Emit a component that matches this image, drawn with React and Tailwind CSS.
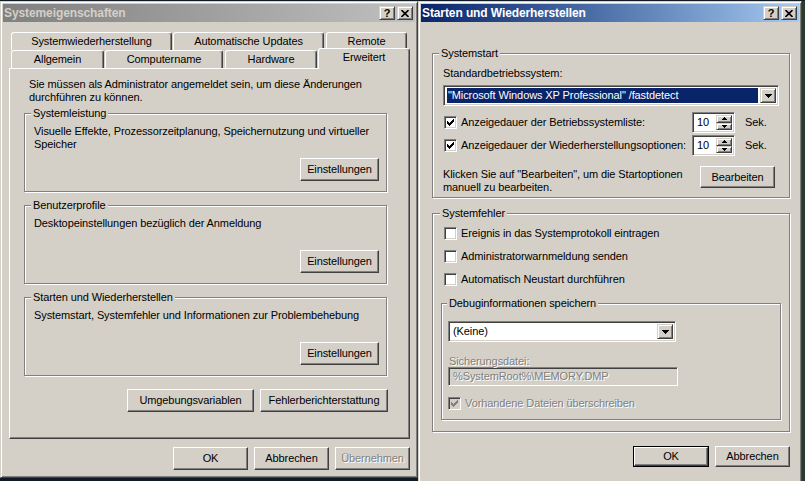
import React from "react";

// classic 3D edges
const raised =
  "border border-t-white border-l-white border-r-[#404040] border-b-[#404040] shadow-[inset_-1px_-1px_0_#808080]";
const raisedSoft =
  "border border-t-[#d4d0c8] border-l-[#d4d0c8] border-r-[#404040] border-b-[#404040] shadow-[inset_1px_1px_0_#fff,inset_-1px_-1px_0_#808080]";
const sunken =
  "border border-t-[#808080] border-l-[#808080] border-r-white border-b-white shadow-[inset_1px_1px_0_#404040,inset_-1px_-1px_0_#d4d0c8]";
const grayText = "text-[#808080] [text-shadow:1px_1px_0_#fff]";

function CaptionButton({ children }) {
  return (
    <div className={`flex h-[14px] w-[16px] items-center justify-center bg-[#d4d0c8] ${raisedSoft}`}>
      {children}
    </div>
  );
}

function TitleBar({ title, active }) {
  const tone = active
    ? "bg-linear-to-r from-[#0a246a] to-[#a6caf0] text-white"
    : "bg-linear-to-r from-[#808080] to-[#c0c0c0] text-[#d4d0c8]";
  return (
    <div className={`flex h-[18px] items-center justify-between pl-[1px] pr-[2px] ${tone}`}>
      <span className="text-[12px] font-bold">{title}</span>
      <div className="flex gap-[2px]">
        <CaptionButton>
          <span className="text-[11px] leading-none font-bold text-black">?</span>
        </CaptionButton>
        <CaptionButton>
          <svg width="8" height="7" viewBox="0 0 8 7">
            <path d="M0.5 0l7 7M7.5 0l-7 7" stroke="#000" strokeWidth="1.6" />
          </svg>
        </CaptionButton>
      </div>
    </div>
  );
}

function Window({ className = "", children }) {
  return (
    <div
      className={`flex flex-col border border-t-[#d4d0c8] border-l-[#d4d0c8] border-r-[#404040] border-b-[#404040] bg-[#d4d0c8] p-[2px] shadow-[inset_1px_1px_0_#fff,inset_-1px_-1px_0_#808080] ${className}`}
    >
      {children}
    </div>
  );
}

function Button({ children, className = "", isDefault = false, disabled = false }) {
  const inner = (
    <div className={`flex h-full w-full items-center justify-center ${raised} ${disabled ? grayText : ""}`}>
      {children}
    </div>
  );
  if (isDefault) {
    return <div className={`border border-black ${className}`}>{inner}</div>;
  }
  return <div className={className}>{inner}</div>;
}

function Group({ label, className = "", children }) {
  return (
    <fieldset className={`border border-[#808080] shadow-[inset_1px_1px_0_#fff,1px_1px_0_#fff] ${className}`}>
      <legend className="bg-[#d4d0c8] px-[2px]">{label}</legend>
      {children}
    </fieldset>
  );
}

function CheckBox({ checked = false, disabled = false }) {
  return (
    <span
      className={`flex h-[13px] w-[13px] shrink-0 items-center justify-center ${sunken} ${disabled ? "bg-[#d4d0c8]" : "bg-white"}`}
    >
      {checked && (
        <svg width="7" height="7" viewBox="0 0 7 7" shapeRendering="crispEdges">
          <path d="M0 2L2 4L6 0L7 0L7 2L2 7L0 5Z" fill={disabled ? "#808080" : "#000"} />
        </svg>
      )}
    </span>
  );
}

function CheckRow({ label, checked, disabled, className = "" }) {
  return (
    <div className={`flex h-[13px] items-center gap-[4px] ${className}`}>
      <CheckBox checked={checked} disabled={disabled} />
      <span className={disabled ? grayText : ""}>{label}</span>
    </div>
  );
}

function DownArrow() {
  return (
    <svg width="7" height="4" viewBox="0 0 7 4" shapeRendering="crispEdges">
      <path d="M0 0H7L3.5 4Z" fill="#000" />
    </svg>
  );
}

function Select({ className = "", highlighted = false, children }) {
  return (
    <div className={`flex items-stretch bg-white p-[2px] ${sunken} ${className}`}>
      <div
        className={`ml-[1px] mr-[2px] flex flex-1 items-center pl-[1px] ${highlighted ? "bg-[#0a246a] text-white" : ""}`}
      >
        {children}
      </div>
      <div className={`flex w-[16px] items-center justify-center bg-[#d4d0c8] ${raisedSoft}`}>
        <DownArrow />
      </div>
    </div>
  );
}

function Spinner({ value }) {
  return (
    <div className={`flex h-[21px] w-[43px] bg-white p-[2px] ${sunken}`}>
      <span className="flex flex-1 items-center pl-[2px]">{value}</span>
      <div className="flex w-[16px] flex-col">
        <div className={`flex flex-1 items-center justify-center bg-[#d4d0c8] ${raisedSoft}`}>
          <svg width="5" height="3" viewBox="0 0 5 3" shapeRendering="crispEdges">
            <path d="M2.5 0L5 3H0Z" fill="#000" />
          </svg>
        </div>
        <div className={`flex flex-1 items-center justify-center bg-[#d4d0c8] ${raisedSoft}`}>
          <svg width="5" height="3" viewBox="0 0 5 3" shapeRendering="crispEdges">
            <path d="M0 0H5L2.5 3Z" fill="#000" />
          </svg>
        </div>
      </div>
    </div>
  );
}

function Tab({ className = "", selected = false, children }) {
  return (
    <div
      className={`flex items-center justify-center rounded-t-[3px] border-t border-l border-r border-t-white border-l-white border-r-[#404040] bg-[#d4d0c8] shadow-[inset_-1px_0_0_#808080] ${selected ? "relative z-10 -mb-px h-[21px] pb-[3px]" : "h-[18px]"} ${className}`}
    >
      {children}
    </div>
  );
}

function SettingsGroup({ label, children }) {
  return (
    <Group label={label} className="mt-[7px] h-[85px] w-[363px] pl-[6px] pr-[7px] first:mt-[3px]">
      <div className="flex h-[61px] flex-col pt-[5px] pl-[3px]">
        <p>{children}</p>
        <Button className="mt-auto h-[23px] w-[79px] self-end">Einstellungen</Button>
      </div>
    </Group>
  );
}

function SystemProperties() {
  return (
    <Window className="h-[477px] w-[418px]">
      <TitleBar title="Systemeigenschaften" />
      <div className="pt-[10px] pl-[6px]">
        <div className="flex pl-[2px]">
          <Tab className="w-[161px]">Systemwiederherstellung</Tab>
          <Tab className="ml-[1px] w-[151px]">Automatische Updates</Tab>
          <Tab className="ml-[2px] w-[81px]">Remote</Tab>
        </div>
        <div className="flex h-[18px] items-end pl-[2px]">
          <Tab className="w-[93px]">Allgemein</Tab>
          <Tab className="ml-[1px] w-[118px]">Computername</Tab>
          <Tab className="ml-[2px] w-[92px]">Hardware</Tab>
          <Tab className="ml-[1px] w-[92px]" selected>
            Erweitert
          </Tab>
        </div>
        <div className={`h-[371px] w-[401px] pt-[9px] pl-[14px] ${raised}`}>
          <p className="pl-[5px]">
            Sie müssen als Administrator angemeldet sein, um diese Änderungen
            <br />
            durchführen zu können.
          </p>
          <div className="flex flex-col">
            <SettingsGroup label="Systemleistung">
              Visuelle Effekte, Prozessorzeitplanung, Speichernutzung und virtueller
              <br />
              Speicher
            </SettingsGroup>
            <SettingsGroup label="Benutzerprofile">Desktopeinstellungen bezüglich der Anmeldung</SettingsGroup>
            <SettingsGroup label="Starten und Wiederherstellen">
              Systemstart, Systemfehler und Informationen zur Problembehebung
            </SettingsGroup>
          </div>
          <div className="mt-[13px] flex w-[364px] justify-end gap-[6px]">
            <Button className="h-[23px] w-[127px]">Umgebungsvariablen</Button>
            <Button className="h-[23px] w-[128px]">Fehlerberichterstattung</Button>
          </div>
        </div>
        <div className="mt-[8px] flex w-[401px] justify-end gap-[6px]">
          <Button className="h-[23px] w-[75px]">OK</Button>
          <Button className="h-[23px] w-[75px]">Abbrechen</Button>
          <Button className="h-[23px] w-[75px]" disabled>
            Übernehmen
          </Button>
        </div>
      </div>
    </Window>
  );
}

function StartupRecovery() {
  return (
    <Window className="h-[490px] w-[384px]">
      <TitleBar title="Starten und Wiederherstellen" active />
      <div className="pl-[11px]">
        <Group label="Systemstart" className="mt-[25px] h-[151px] w-[358px] pl-[6px]">
          <div className="w-[336px] pt-[7px] pl-[4px]">
            <p>Standardbetriebssystem:</p>
            <Select className="mt-[5px] h-[21px] w-[336px]" highlighted>
              "Microsoft Windows XP Professional" /fastdetect
            </Select>
            <div className="mt-[6px] flex h-[21px] items-center">
              <div className="flex w-[249px] items-center">
                <CheckRow className="ml-[1px]" label="Anzeigedauer der Betriebssystemliste:" checked />
              </div>
              <Spinner value="10" />
              <span className="ml-[10px]">Sek.</span>
            </div>
            <div className="mt-[2px] flex h-[21px] items-center">
              <div className="flex w-[249px] items-center">
                <CheckRow className="ml-[1px]" label="Anzeigedauer der Wiederherstellungsoptionen:" checked />
              </div>
              <Spinner value="10" />
              <span className="ml-[10px]">Sek.</span>
            </div>
            <div className="mt-[10px] flex justify-between">
              <p className="pt-[2px]">
                Klicken Sie auf "Bearbeiten", um die Startoptionen
                <br />
                manuell zu bearbeiten.
              </p>
              <Button className="h-[22px] w-[75px]">Bearbeiten</Button>
            </div>
          </div>
        </Group>

        <Group label="Systemfehler" className="mt-[9px] h-[225px] w-[358px] pl-[7px]">
          <div className="pt-[7px]">
            <CheckRow className="ml-[4px]" label="Ereignis in das Systemprotokoll eintragen" />
            <CheckRow className="mt-[10px] ml-[4px]" label="Administratorwarnmeldung senden" />
            <CheckRow className="mt-[10px] ml-[4px]" label="Automatisch Neustart durchführen" />
            <Group label="Debuginformationen speichern" className="mt-[11px] ml-[1px] h-[123px] w-[340px] pl-[5px]">
              <div className="pt-[11px] pl-[1px]">
                <Select className="h-[21px] w-[228px]">(Keine)</Select>
                <p className={`mt-[13px] pl-[1px] leading-[12px] ${grayText}`}>Sicherungsdatei:</p>
                <div className={`flex h-[19px] w-[230px] items-center bg-[#d4d0c8] pl-[4px] ${sunken} ${grayText}`}>
                  %SystemRoot%\MEMORY.DMP
                </div>
                <CheckRow className="mt-[11px]" label="Vorhandene Dateien überschreiben" checked disabled />
              </div>
            </Group>
          </div>
        </Group>

        <div className="mt-[14px] flex w-[358px] justify-end gap-[6px]">
          <Button className="h-[21px] w-[76px]" isDefault>
            OK
          </Button>
          <Button className="h-[21px] w-[75px]">Abbrechen</Button>
        </div>
      </div>
    </Window>
  );
}

export default function App() {
  return (
    <div className="h-[481px] w-[805px] overflow-hidden bg-[#101a22] pt-[1px] font-['Liberation_Sans',Arial,sans-serif] text-[11px] leading-[13px] tracking-[-0.1px] text-black">
      <div className="flex items-start">
        <SystemProperties />
        <StartupRecovery />
        <div className="h-[490px] flex-1 bg-[#2a3a2c]" />
      </div>
    </div>
  );
}
